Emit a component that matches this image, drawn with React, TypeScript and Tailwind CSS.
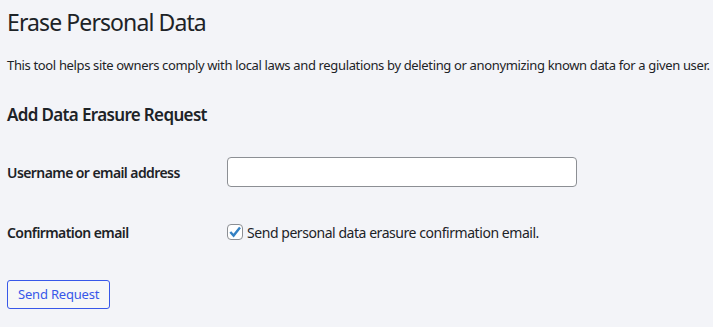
import React from "react";

const App = () => {
  return (
    <div className="w-[713px] h-[327px] bg-[#f3f4f8] text-[#1d2327] px-[7px] overflow-hidden font-['Noto_Sans',sans-serif]">
      <h1 className="text-[23px] font-normal leading-[29px] pt-[8px] text-[#1d2327] tracking-[-0.9px]">
        Erase Personal Data
      </h1>
      <p className="mt-[19px] text-[13px] leading-[19px] tracking-[-0.35px] whitespace-nowrap">
        This tool helps site owners comply with local laws and regulations by deleting or anonymizing known data for a given user.
      </p>
      <h2 className="mt-[29px] text-[17px] font-semibold leading-[22px] tracking-[-0.65px]">
        Add Data Erasure Request
      </h2>

      <div className="mt-[31px] flex items-center h-[30px]">
        <label className="w-[220px] text-[14px] font-semibold tracking-[-0.58px]">
          Username or email address
        </label>
        <input
          type="text"
          className="w-[350px] h-[30px] bg-white border border-[#8c8f94] rounded-[4px] px-2 text-[14px] outline-none"
        />
      </div>

      <div className="mt-[36px] flex items-center h-[18px]">
        <span className="w-[220px] text-[14px] font-semibold tracking-[-0.58px]">
          Confirmation email
        </span>
        <label className="flex items-center gap-[4px] text-[14px] tracking-[-0.45px]">
          <span className="w-[16px] h-[16px] border border-[#8c8f94] rounded-[4px] bg-white flex items-center justify-center">
            <svg width="14" height="14" viewBox="0 0 14 14">
              <path d="M2.3 7 L5.6 10.6 L12 2.6" fill="none" stroke="#3582c4" strokeWidth="2.4" />
            </svg>
          </span>
          Send personal data erasure confirmation email.
        </label>
      </div>

      <button className="mt-[39px] h-[29px] px-[10px] border border-[#3858e9] rounded-[3px] text-[#3858e9] text-[13px] bg-[#f6f7f7] leading-[27px] tracking-[-0.2px]">
        Send Request
      </button>
    </div>
  );
};

export default App;
